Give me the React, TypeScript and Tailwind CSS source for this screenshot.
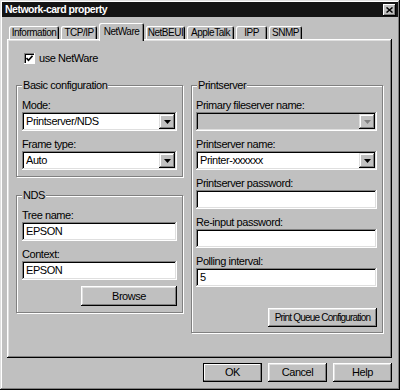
import React from "react";

const tabs = [
  { label: "Information", w: "w-[50px]" },
  { label: "TCP/IP", w: "w-[36px]" },
  { label: "NetWare", w: "w-[45px]", active: true },
  { label: "NetBEUI", w: "w-[39px]" },
  { label: "AppleTalk", w: "w-[47px]" },
  { label: "IPP", w: "w-[31px]" },
  { label: "SNMP", w: "w-[33px]" },
];

function Arrow({ disabled }: { disabled?: boolean }) {
  return (
    <div className="w-[16px] h-[15px] bg-[#c0c0c0] flex items-center justify-center shadow-[inset_-1px_-1px_#000,inset_1px_1px_#dfdfdf,inset_-2px_-2px_#808080,inset_2px_2px_#fff]">
      <svg width="7" height="4" viewBox="0 0 7 4">
        <path d="M0 0h7L3.5 4z" fill={disabled ? "#808080" : "#000"} />
      </svg>
    </div>
  );
}

function Field({
  label,
  value,
  select,
  disabled,
  first,
}: {
  label: string;
  value?: string;
  select?: boolean;
  disabled?: boolean;
  first?: boolean;
}) {
  return (
    <div className={`flex flex-col ${first ? "" : "mt-[7px]"}`}>
      <div className="h-[13px] leading-[13px] whitespace-nowrap">{label}</div>
      <div
        className={`h-[19px] flex items-center pl-[4px] pr-[2px] shadow-[inset_-1px_-1px_#fff,inset_1px_1px_#808080,inset_-2px_-2px_#dfdfdf,inset_2px_2px_#000] ${
          disabled ? "bg-[#c0c0c0]" : "bg-white"
        }`}
      >
        <span className="flex-1 truncate leading-[13px]">{value}</span>
        {select && <Arrow disabled={disabled} />}
      </div>
    </div>
  );
}

function Group({
  title,
  className,
  children,
}: {
  title: string;
  className: string;
  children: React.ReactNode;
}) {
  return (
    <div
      className={`relative flex flex-col border border-[#808080] shadow-[inset_1px_1px_#fff,1px_1px_#fff] pt-[13px] ${className}`}
    >
      <span className="absolute left-[5px] top-[-7px] bg-[#c0c0c0] px-[1px] leading-[13px] whitespace-nowrap">
        {title}
      </span>
      {children}
    </div>
  );
}

function Button({ label, className }: { label: string; className: string }) {
  return (
    <div
      className={`flex items-center justify-center bg-[#c0c0c0] leading-[13px] whitespace-nowrap shadow-[inset_-1px_-1px_#000,inset_1px_1px_#fff,inset_-2px_-2px_#808080,inset_2px_2px_#dfdfdf] ${className}`}
    >
      {label}
    </div>
  );
}

export default function App() {
  return (
    <div className="w-[400px] h-[390px] bg-[#c0c0c0] flex flex-col text-[11px] tracking-[-0.45px] text-black font-['Liberation_Sans',Arial,sans-serif] shadow-[inset_-1px_-1px_#000,inset_1px_1px_#dfdfdf,inset_-2px_-2px_#808080,inset_2px_2px_#fff]">
      {/* Title bar */}
      <div className="mx-[2px] mt-[2px] h-[15px] bg-[#141414] flex items-center justify-between">
        <span className="pl-[3px] text-white font-bold text-[10.5px] tracking-[-0.5px] leading-[15px]">
          Network-card property
        </span>
        <div className="mr-[2px] w-[13px] h-[12px] bg-[#c0c0c0] flex items-center justify-center shadow-[inset_-1px_-1px_#000,inset_1px_1px_#fff,inset_-2px_-2px_#808080]">
          <svg width="7" height="6" viewBox="0 0 7 6">
            <path d="M0.5 0.5l6 5M6.5 0.5l-6 5" stroke="#000" strokeWidth="1.5" />
          </svg>
        </div>
      </div>

      {/* Tabs */}
      <div className="mt-[6px] h-[16px] pl-[9px] flex items-end gap-[2px] text-[10px] tracking-[-0.5px]">
        {tabs.map((t) =>
          t.active ? (
            <div
              key={t.label}
              className={`${t.w} relative z-10 h-[18px] -mb-[2px] pt-[2px] text-center leading-[13px] whitespace-nowrap bg-[#c0c0c0] rounded-t-[2px] shadow-[inset_1px_1px_#fff,inset_-1px_0_#000,inset_-2px_0_#808080]`}
            >
              {t.label}
            </div>
          ) : (
            <div
              key={t.label}
              className={`${t.w} h-[13px] text-center leading-[13px] whitespace-nowrap rounded-t-[2px] shadow-[inset_1px_1px_#fff,inset_-1px_0_#000,inset_-2px_0_#808080]`}
            >
              {t.label}
            </div>
          )
        )}
      </div>

      {/* Tab panel */}
      <div className="ml-[7px] w-[385px] h-[319px] px-[9px] pt-[13px] flex flex-col shadow-[inset_-1px_-1px_#000,inset_1px_1px_#fff,inset_-2px_-2px_#808080,inset_2px_2px_#dfdfdf]">
        <div className="h-[13px] flex items-center ml-[8px]">
          <div className="w-[11px] h-[11px] bg-white flex items-center justify-center shadow-[inset_-1px_-1px_#fff,inset_1px_1px_#808080,inset_2px_2px_#000]">
            <svg width="7" height="7" viewBox="0 0 7 7">
              <path d="M0.5 3l2 2.2L6.5 0.8" stroke="#000" strokeWidth="1.6" fill="none" />
            </svg>
          </div>
          <span className="ml-[4px] leading-[13px]">use NetWare</span>
        </div>

        <div className="mt-[20px] flex gap-[8px]">
          <div className="w-[167px] flex flex-col">
            <Group title="Basic configuration" className="h-[92px] px-[5px]">
              <Field first label="Mode:" value="Printserver/NDS" select />
              <Field label="Frame type:" value="Auto" select />
            </Group>
            <Group title="NDS" className="mt-[18px] h-[118px] px-[5px]">
              <Field first label="Tree name:" value="EPSON" />
              <Field label="Context:" value="EPSON" />
              <Button label="Browse" className="mt-[6px] self-end w-[96px] h-[20px]" />
            </Group>
          </div>
          <Group title="Printserver" className="w-[192px] h-[248px] pl-[4px] pr-[5px]">
            <Field first label="Primary fileserver name:" select disabled />
            <Field label="Printserver name:" value="Printer-xxxxxx" select />
            <Field label="Printserver password:" />
            <Field label="Re-input password:" />
            <Field label="Polling interval:" value="5" />
            <Button
              label="Print Queue Configuration"
              className="mt-[21px] self-end w-[109px] h-[19px] text-[10px] tracking-[-0.8px]"
            />
          </Group>
        </div>
      </div>

      {/* Dialog buttons */}
      <div className="mt-[5px] pr-[8px] flex justify-end gap-[6px]">
        <div className="w-[59px] h-[19px] flex items-center justify-center leading-[13px] shadow-[inset_0_0_0_1px_#000,inset_-2px_-2px_#808080,inset_2px_2px_#fff]">
          OK
        </div>
        <Button label="Cancel" className="w-[59px] h-[19px]" />
        <Button label="Help" className="w-[59px] h-[19px]" />
      </div>
    </div>
  );
}
